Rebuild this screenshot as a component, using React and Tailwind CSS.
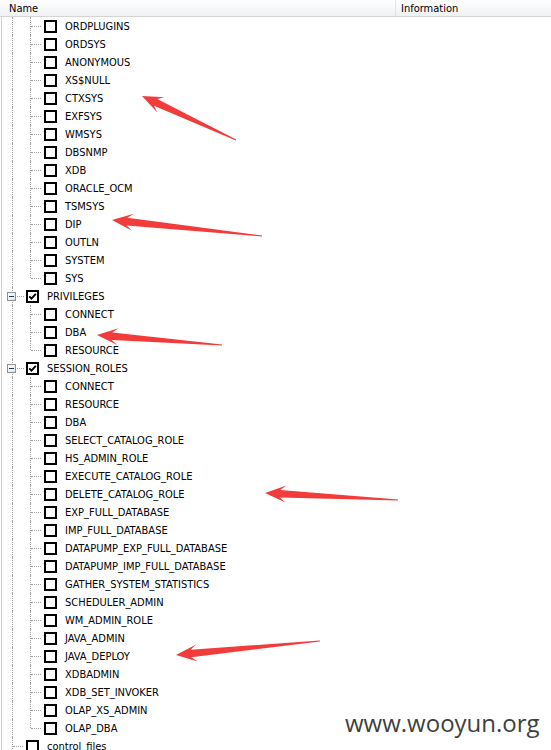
import React from 'react';

const groupA = [
  'ORDPLUGINS', 'ORDSYS', 'ANONYMOUS', 'XS$NULL', 'CTXSYS', 'EXFSYS', 'WMSYS', 'DBSNMP',
  'XDB', 'ORACLE_OCM', 'TSMSYS', 'DIP', 'OUTLN', 'SYSTEM', 'SYS',
];
const privileges = ['CONNECT', 'DBA', 'RESOURCE'];
const sessionRoles = [
  'CONNECT', 'RESOURCE', 'DBA', 'SELECT_CATALOG_ROLE', 'HS_ADMIN_ROLE', 'EXECUTE_CATALOG_ROLE',
  'DELETE_CATALOG_ROLE', 'EXP_FULL_DATABASE', 'IMP_FULL_DATABASE', 'DATAPUMP_EXP_FULL_DATABASE',
  'DATAPUMP_IMP_FULL_DATABASE', 'GATHER_SYSTEM_STATISTICS', 'SCHEDULER_ADMIN', 'WM_ADMIN_ROLE',
  'JAVA_ADMIN', 'JAVA_DEPLOY', 'XDBADMIN', 'XDB_SET_INVOKER', 'OLAP_XS_ADMIN', 'OLAP_DBA',
];

const children = (list) =>
  list.map((label, i) => ({ label, guides: ['line', i === list.length - 1 ? 'elbow' : 'tee'] }));

const rows = [
  ...children(groupA),
  { label: 'PRIVILEGES', guides: ['exp'], checked: true },
  ...children(privileges),
  { label: 'SESSION_ROLES', guides: ['exp'], checked: true },
  ...children(sessionRoles),
  { label: 'control_files', guides: ['tee'] },
];

const dot = 'border-dotted border-[#a0a0a0]';

function Guide({ type }) {
  return (
    <div className="relative h-[18px] w-[18px] shrink-0">
      {type !== 'none' && (
        <div
          className={`absolute left-[9px] top-0 border-l ${dot} ${type === 'elbow' ? 'h-[9px]' : 'h-[18px]'}`}
        />
      )}
      {(type === 'tee' || type === 'elbow') && (
        <div className={`absolute left-[10px] top-[9px] w-[10px] border-t ${dot}`} />
      )}
      {type === 'exp' && (
        <>
          <div className={`absolute left-[14px] top-[9px] w-[7px] border-t ${dot}`} />
          <div className="absolute left-[4px] top-[5px] flex h-[9px] w-[9px] items-center justify-center border border-[#919191] bg-gradient-to-br from-white to-[#e3e3e3]">
            <div className="h-px w-[5px] bg-[#1e3a5f]" />
          </div>
        </>
      )}
    </div>
  );
}

function Checkbox({ checked }) {
  return (
    <div className="ml-[5px] flex h-[13px] w-[13px] shrink-0 items-center justify-center border-2 border-black bg-white">
      {checked && (
        <svg width="9" height="9" viewBox="0 0 9 9">
          <path d="M1.2 4.3 L3.5 6.7 L7.8 1.8" fill="none" stroke="#000" strokeWidth="1.9" />
        </svg>
      )}
    </div>
  );
}

function Row({ row }) {
  return (
    <div className="flex h-[18px] items-center">
      {row.guides.map((g, i) => (
        <Guide key={i} type={g} />
      ))}
      <Checkbox checked={row.checked} />
      <span className="ml-[8px] mt-px whitespace-nowrap leading-[18px]">{row.label}</span>
    </div>
  );
}

function arrowPoints(tx, ty, ex, ey) {
  const dx = ex - tx;
  const dy = ey - ty;
  const len = Math.hypot(dx, dy);
  const ux = dx / len;
  const uy = dy / len;
  const nx = -uy;
  const ny = ux;
  const at = (d, w) => `${(tx + ux * d + nx * w).toFixed(1)},${(ty + uy * d + ny * w).toFixed(1)}`;
  return [
    at(0, 0),
    at(21, 8.5),
    at(15, 3.8),
    at(len, 0.5),
    at(len, -0.5),
    at(15, -3.8),
    at(21, -8.5),
  ].join(' ');
}

const arrows = [
  [142, 96, 236, 140],
  [112, 220, 262, 236],
  [97, 335, 222, 345],
  [265, 493, 398, 500],
  [176, 655, 320, 641],
];

export default function App() {
  return (
    <div className="relative h-[750px] w-[551px] overflow-hidden bg-white font-['DejaVu_Sans_Condensed','DejaVu_Sans',sans-serif] text-[11px] text-black">
      <div className="flex h-[17px] border-b border-[#d5d5d5] bg-gradient-to-b from-white to-[#f0f1f3] leading-[17px]">
        <div className="w-[396px] shrink-0 border-r border-[#e2e3e5] pl-[9px]">Name</div>
        <div className="pl-[5px]">Information</div>
      </div>
      <div className="ml-[1px] border-l border-[#cfcfcf] pl-[1px]">
        {rows.map((row, i) => (
          <Row key={i} row={row} />
        ))}
      </div>

      <svg className="pointer-events-none absolute inset-0" width="551" height="750">
        {arrows.map((a, i) => (
          <polygon key={i} points={arrowPoints(...a)} fill="#f23b3b" />
        ))}
      </svg>

      <div className="absolute left-[345px] top-[705px] font-['Open_Sans',sans-serif] text-[24px] leading-[36px] text-[#3f3f3f]">
        www.wooyun.org
      </div>
    </div>
  );
}
